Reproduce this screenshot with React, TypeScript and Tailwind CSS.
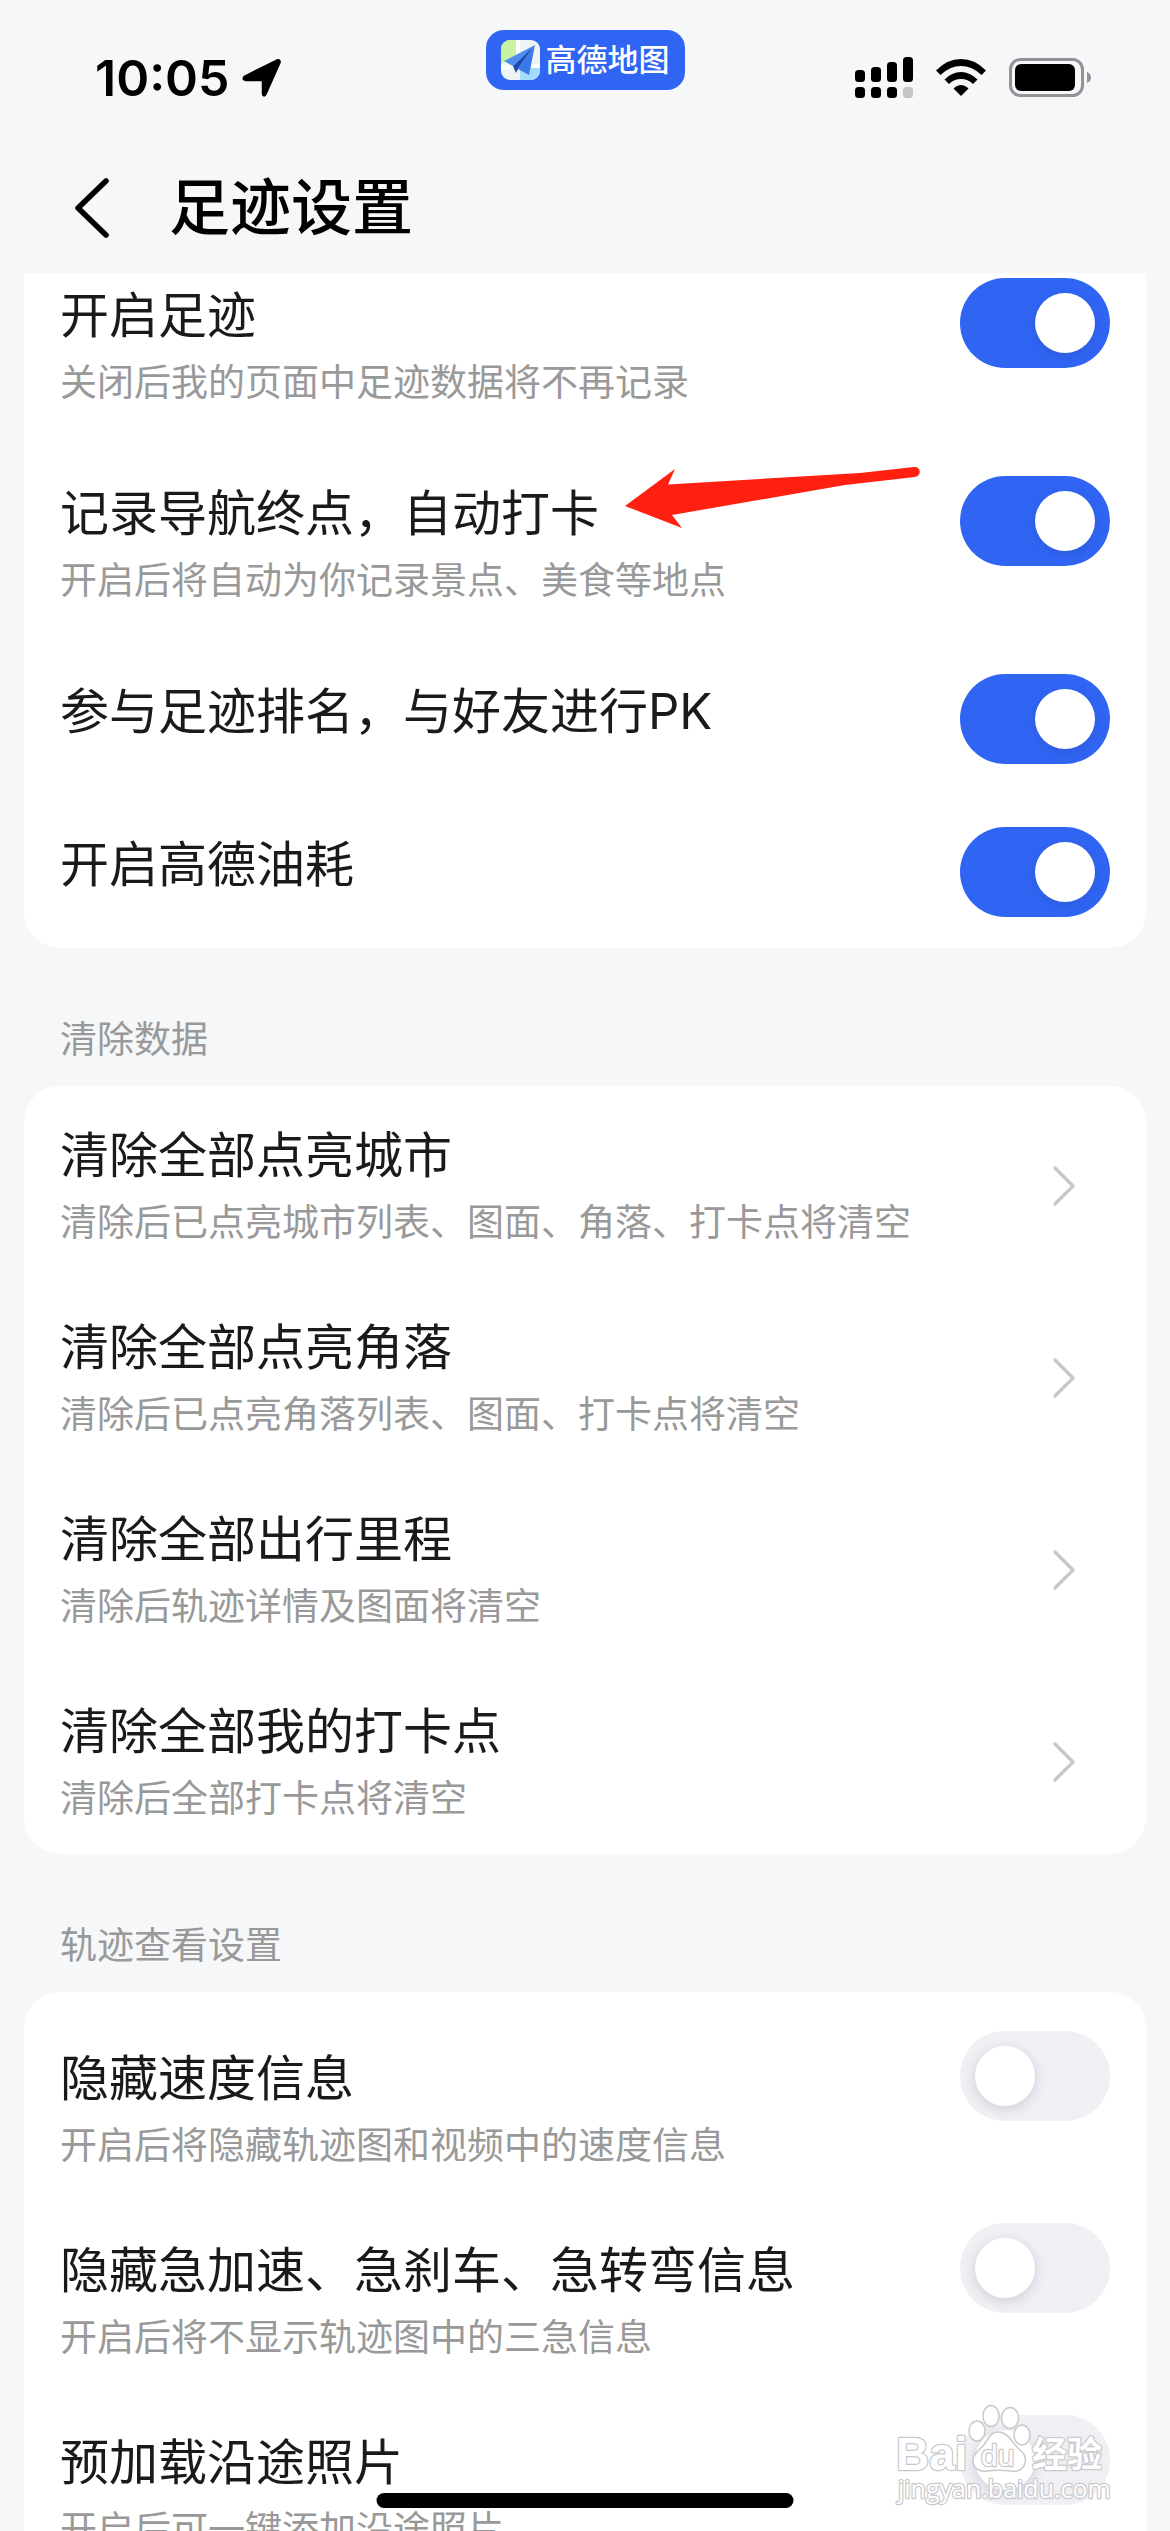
import { useId, useState } from "react";

const SWITCH_ROWS = [
  { title: "开启足迹", desc: "关闭后我的页面中足迹数据将不再记录" },
  { title: "记录导航终点，自动打卡", desc: "开启后将自动为你记录景点、美食等地点", pointed: true },
  { title: "参与足迹排名，与好友进行PK" },
  { title: "开启高德油耗" },
];

const CLEAR_ROWS = [
  { title: "清除全部点亮城市", desc: "清除后已点亮城市列表、图面、角落、打卡点将清空" },
  { title: "清除全部点亮角落", desc: "清除后已点亮角落列表、图面、打卡点将清空" },
  { title: "清除全部出行里程", desc: "清除后轨迹详情及图面将清空" },
  { title: "清除全部我的打卡点", desc: "清除后全部打卡点将清空" },
];

const TRACK_ROWS = [
  { title: "隐藏速度信息", desc: "开启后将隐藏轨迹图和视频中的速度信息" },
  { title: "隐藏急加速、急刹车、急转弯信息", desc: "开启后将不显示轨迹图中的三急信息" },
  { title: "预加载沿途照片", desc: "开启后可一键添加沿途照片" },
];

function Switch({ id, defaultOn }: { id: string; defaultOn: boolean }) {
  const [on, setOn] = useState(defaultOn);
  return (
    <input
      id={id}
      type="checkbox"
      role="switch"
      checked={on}
      onChange={(e) => setOn(e.target.checked)}
      className="h-[90px] w-[150px] shrink-0 cursor-pointer appearance-none rounded-full bg-[#efeff4] p-[15px] before:block before:size-[60px] before:rounded-full before:bg-white before:shadow-[0_3px_12px_rgba(40,40,90,0.16)] checked:bg-[#3065f4] checked:before:ml-auto"
    />
  );
}

function PointerArrow() {
  return (
    <svg
      viewBox="0 0 296 64"
      className="pointer-events-none absolute -top-3 left-full ml-[26px] h-16 w-[296px]"
      aria-hidden="true"
    >
      <path
        d="M0 42 50 5 43 20.500 235 9 289 3c7-1 8 9 1 10L220 21 47 51l10 13Z"
        fill="#ff2012"
      />
    </svg>
  );
}

type SwitchRowProps = {
  title: string;
  desc?: string;
  defaultOn: boolean;
  pointed?: boolean;
  className: string;
  textClass?: string;
};

function SwitchRow({ title, desc, defaultOn, pointed, className, textClass = "" }: SwitchRowProps) {
  const id = useId();
  return (
    <li className={`flex items-start justify-between px-9 ${className}`}>
      <div className={textClass}>
        <label htmlFor={id} className="relative block w-fit text-[49px] leading-[76px] whitespace-nowrap text-[#1a1a1a]">
          {title}
          {pointed && <PointerArrow />}
        </label>
        {desc && <p className="mt-1 text-[37px] leading-[50px] whitespace-nowrap text-[#999]">{desc}</p>}
      </div>
      <Switch id={id} defaultOn={defaultOn} />
    </li>
  );
}

function ClearRow({ title, desc }: { title: string; desc: string }) {
  return (
    <li>
      <button type="button" className="flex h-48 w-full items-center justify-between pt-0.5 pr-[70px] pl-9 text-left">
        <span>
          <span className="block text-[49px] leading-[76px] text-[#1a1a1a]">{title}</span>
          <span className="mt-1 block text-[37px] leading-[50px] text-[#999]">{desc}</span>
        </span>
        <svg viewBox="0 0 24 48" className="h-12 w-6 shrink-0" fill="none" aria-hidden="true">
          <path d="m3 9 18 18L3 45" stroke="#c8c8c8" strokeWidth="3.500" strokeLinecap="round" strokeLinejoin="round" />
        </svg>
      </button>
    </li>
  );
}

function SectionTitle({ children }: { children: string }) {
  return <h2 className="px-9 pt-[67px] pb-[21px] text-[37px] leading-[50px] text-[#999]">{children}</h2>;
}

function AmapLogo() {
  return (
    <svg viewBox="0 0 39 40" className="h-10 w-[39px]" aria-hidden="true">
      <clipPath id="amap-tile">
        <rect width="39" height="40" rx="9" />
      </clipPath>
      <g clipPath="url(#amap-tile)">
        <rect width="39" height="40" fill="#eef4f4" />
        <path d="M0 0h15v15L0 24Z" fill="#c9f3a0" />
        <path d="M15 0h4v14l-4 2ZM0 24l10 3v3H0Z" fill="#fff" />
        <path d="M19 28h20v12H19Z" fill="#a5dcfb" />
        <path d="M31 24h8v4h-8Z" fill="#fff" />
      </g>
      <path d="M34 5 3 21l9 5Z" fill="#4d8df0" />
      <path d="M34 5 12 26l3 7 2-4Z" fill="#1c4bb4" />
      <path d="M34 5 17 29l11 6Z" fill="#3a7ae8" />
    </svg>
  );
}

function StatusBar() {
  return (
    <div className="grid grid-cols-[1fr_auto_1fr] items-start pt-[30px]">
      <div className="flex h-24 items-center gap-3 pl-[95px] text-[50px] font-semibold text-black">
        <span>10:05</span>
        <svg viewBox="0 0 40 40" className="size-10" aria-hidden="true">
          <path
            d="M3 18.500 35 2.500q3-1 2.500 2L23.500 36q-2 3-2.500-.5V22H4q-4-.5-1-3.500Z"
            stroke="#000"
            strokeWidth="2.500"
            strokeLinejoin="round"
          />
        </svg>
      </div>
      <div className="flex h-15 items-center gap-1.5 rounded-[18px] bg-[#3065f4] px-[15px]">
        <AmapLogo />
        <span className="text-[31px] leading-10 font-medium text-white">高德地图</span>
      </div>
      <div className="flex h-24 items-center justify-end gap-[23px] pr-[78px]">
        <svg viewBox="0 0 58 42" className="h-[42px] w-[58px]" aria-hidden="true">
          <rect x="0" y="13" width="10" height="12" rx="3.500" />
          <rect x="16" y="10" width="10" height="15" rx="3.500" />
          <rect x="32" y="5" width="10" height="20" rx="3.500" />
          <rect x="48" y="0" width="10" height="25" rx="3.500" />
          <rect x="0" y="30" width="10" height="11" rx="3.500" />
          <rect x="16" y="30" width="10" height="11" rx="3.500" />
          <rect x="32" y="30" width="10" height="11" rx="3.500" />
          <rect x="48" y="30" width="10" height="11" rx="3.500" fill="#c4c5c7" />
        </svg>
        <svg viewBox="0 0 50 38" className="h-[38px] w-[50px]" aria-hidden="true">
          <path d="M0 11.500Q11 0 25 0t25 11.500L45.500 16Q36 7 25 7T4.500 16Z" />
          <path d="M8.500 20.500Q16 13 25 13t16.500 7.500L37 25q-5-5-12-5t-12 5Z" />
          <path d="M17.500 29.500Q21 26 25 26t7.500 3.500L25 37Z" />
        </svg>
        <svg viewBox="0 0 83 40" className="h-10 w-[83px]" aria-hidden="true">
          <rect x="1.500" y="1.500" width="72" height="36" rx="10" fill="none" stroke="#929396" strokeWidth="3" />
          <rect x="6" y="6" width="60" height="27" rx="6" />
          <path d="M78 14q4 1.500 4 5.500T78 25Z" fill="#929396" />
        </svg>
      </div>
    </div>
  );
}

function Watermark() {
  return (
    <svg
      viewBox="0 0 220 120"
      className="pointer-events-none absolute right-[57px] bottom-[11px] h-[120px] w-[220px]"
      fill="#fff"
      stroke="#c9c9cc"
      aria-hidden="true"
    >
      <g strokeWidth="1.500">
        <ellipse cx="84" cy="31" rx="8" ry="10" />
        <ellipse cx="98" cy="16" rx="8" ry="10.500" />
        <ellipse cx="117" cy="18" rx="8.500" ry="10.500" />
        <ellipse cx="129" cy="35" rx="8" ry="10" />
        <path d="M105 32c9 0 13 8 18 14 6 6 11 9 9 17-2 7-8 9-14 8-8-1-16-1-24 0-7 1-13-2-14-9-1-7 5-11 10-16 5-6 7-14 15-14Z" />
      </g>
      <g strokeWidth="2.500" paintOrder="stroke" strokeLinejoin="round">
        <text x="3" y="70" className="font-['Liberation_Sans'] text-[46px] font-bold">
          Bai
        </text>
        <text x="88" y="66" className="font-['Liberation_Sans'] text-[30px]">
          du
        </text>
        <text x="139" y="67" className="text-[35px] font-bold">
          经验
        </text>
        <text x="5" y="98" className="font-['Open_Sans'] text-[25px]">
          jingyan.baidu.com
        </text>
      </g>
    </svg>
  );
}

export default function App() {
  return (
    <div className="relative h-screen overflow-hidden bg-[#f5f7f9] font-['Inter','Noto_Sans_CJK_SC',sans-serif]">
      <header className="relative z-10 bg-[#f5f7f9]">
        <StatusBar />
        <div className="flex h-[147px] items-center gap-[60px] pt-4 pl-[75px]">
          <button type="button" aria-label="返回">
            <svg viewBox="0 0 34 60" className="h-15 w-[34px]" fill="none" aria-hidden="true">
              <path d="M31 3 3 30l28 27" stroke="#000" strokeWidth="5.500" strokeLinecap="round" strokeLinejoin="round" />
            </svg>
          </button>
          <h1 className="text-[61px] leading-[80px] font-medium text-black">足迹设置</h1>
        </div>
      </header>

      <main className="px-6">
        {/* scrolled slightly under the header */}
        <ul className="-mt-[27px] rounded-[36px] bg-white">
          {SWITCH_ROWS.map((row) => (
            <SwitchRow key={row.title} {...row} defaultOn className={row.desc ? "h-[198px] pt-8" : "h-[153px] pt-8"} />
          ))}
        </ul>

        <SectionTitle>清除数据</SectionTitle>
        <ul className="rounded-[36px] bg-white">
          {CLEAR_ROWS.map((row) => (
            <ClearRow key={row.title} {...row} />
          ))}
        </ul>

        <SectionTitle>轨迹查看设置</SectionTitle>
        <ul className="rounded-t-[36px] bg-white">
          {TRACK_ROWS.map((row) => (
            <SwitchRow key={row.title} {...row} defaultOn={false} className="h-48 pt-[39px]" textClass="pt-2.5" />
          ))}
        </ul>
      </main>

      <Watermark />
      <div className="absolute bottom-[23px] left-1/2 h-[15px] w-[417px] -translate-x-1/2 rounded-full bg-black" />
    </div>
  );
}
